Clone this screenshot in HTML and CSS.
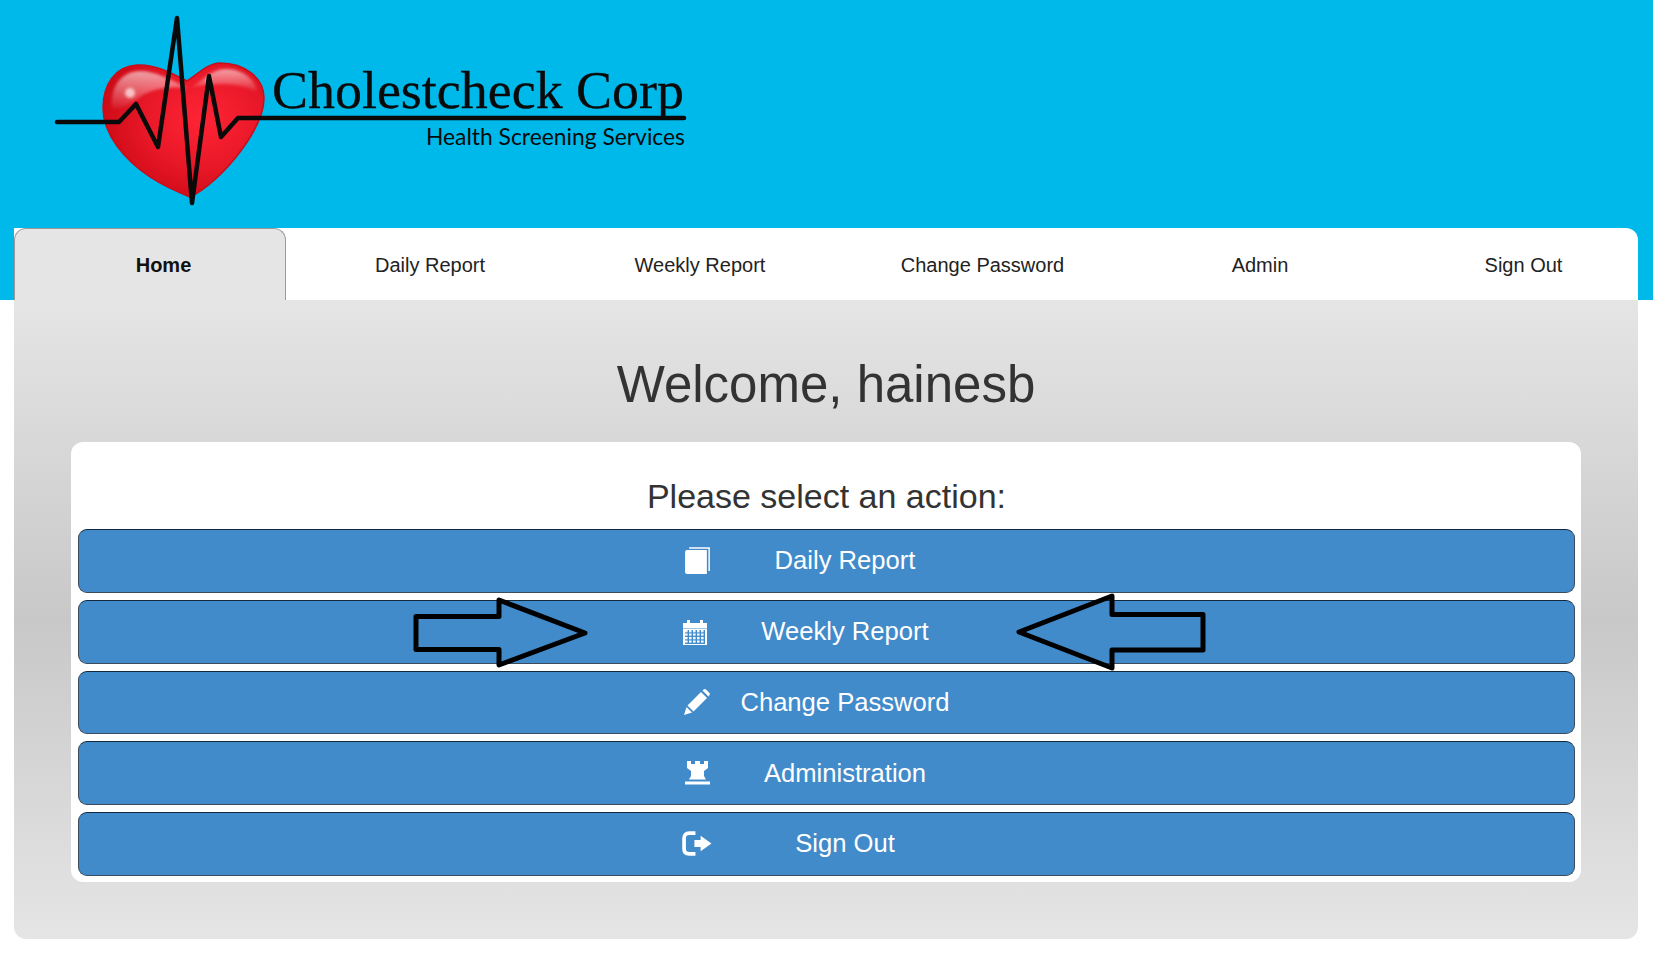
FILE: index.html
```html
<!DOCTYPE html>
<html lang="en">
<head>
  <meta charset="UTF-8" />
  <meta name="viewport" content="width=device-width, initial-scale=1.0"/>
  <title>Cholestcheck Corp</title>
  <link rel="stylesheet" href="styles.css">
</head>

<body>

  <!-- HEADER -->
  <header class="top">
    <svg class="logo" viewBox="0 0 720 228" width="720" height="228">
      <defs>
        <radialGradient id="heartFill" cx="0.62" cy="0.42" r="0.72">
          <stop offset="0" stop-color="#ff2435"/>
          <stop offset="0.5" stop-color="#e81828"/>
          <stop offset="0.85" stop-color="#d00b18"/>
          <stop offset="1" stop-color="#c00812"/>
        </radialGradient>
        <linearGradient id="shine" x1="0" y1="0" x2="0" y2="1">
          <stop offset="0" stop-color="#ffffff" stop-opacity="0.6"/>
          <stop offset="1" stop-color="#ffffff" stop-opacity="0.05"/>
        </linearGradient>
        <filter id="soft" x="-30%" y="-30%" width="160%" height="160%">
          <feGaussianBlur stdDeviation="1.5"/>
        </filter>
      </defs>
      <path d="M187 81 C172 73 155 64 137 65 C115 66 103 85 103 108 C103 135 125 160 150 177 C165 187 180 193 190 197 C205 190 225 172 240 152 C255 132 264 115 264 98 C264 78 245 63 220 63 C208 63 197 75 187 81 Z" fill="url(#heartFill)" stroke="#c50f1c" stroke-width="1.5"/>
      <path d="M112 108 C110 86 122 71 140 71 C155 71 170 79 187 88 C170 86 150 88 136 100 C128 106 118 110 112 108 Z" fill="url(#shine)" filter="url(#soft)"/>
      <path d="M192 87 C203 80 212 69 226 69 C243 69 256 80 257 92 C245 84 220 82 192 87 Z" fill="url(#shine)" filter="url(#soft)"/>
      <circle cx="130" cy="93" r="5" fill="#fff" opacity="0.65" filter="url(#soft)"/>
      <ellipse cx="209" cy="82" rx="2.5" ry="7" fill="#fff" opacity="0.8" filter="url(#soft)"/>
      <polyline points="57,122 119,122 136,104 158,147 177,18 192,203 209,76 221,137 238,118 684,118" fill="none" stroke="#0a0a0a" stroke-width="4.5" stroke-linejoin="round" stroke-linecap="round"/>
      <text class="logo-name" x="272" y="108" textLength="412" lengthAdjust="spacingAndGlyphs">Cholestcheck Corp</text>
      <text class="logo-sub" x="426" y="145" textLength="259" lengthAdjust="spacingAndGlyphs">Health Screening Services</text>
    </svg>

    <!-- NAVIGATION -->
    <nav class="tabs">
      <a class="tab active" href="#">Home</a>
      <a class="tab" href="#">Daily Report</a>
      <a class="tab" href="#">Weekly Report</a>
      <a class="tab" href="#">Change Password</a>
      <a class="tab" href="#">Admin</a>
      <a class="tab" href="#">Sign Out</a>
    </nav>
  </header>

  <main class="panel">
    <h1>Welcome, hainesb</h1>

    <div class="card">
      <h2>Please select an action:</h2>

      <div class="actions">
        <a class="action" href="#">
          <svg class="icon" width="25" height="27" viewBox="0 0 24 26">
            <path d="M0 5 Q0 3 2 3 H21 V26 H2 Q0 26 0 24 Z" fill="#fff"/>
            <path d="M4 1 H23.2 V23" fill="none" stroke="#fff" stroke-width="1.4"/>
          </svg>
          <span>Daily Report</span>
        </a>

        <a class="action" href="#">
          <svg class="icon icon-cal" width="24" height="26" viewBox="0 0 24 26">
            <defs>
              <pattern id="calCells" x="2" y="11" width="4" height="3.5" patternUnits="userSpaceOnUse">
                <rect width="2.6" height="2.2" fill="#fff"/>
              </pattern>
            </defs>
            <path d="M0 4 H4 V1 H7 V4 H17 V1 H20 V4 H24 V9.5 H0 Z" fill="#fff"/>
            <rect x="0" y="10" width="24" height="16" fill="#fff"/>
            <rect x="2" y="11" width="20" height="14" fill="#428bca"/>
            <rect x="2" y="11" width="20" height="14" fill="url(#calCells)"/>
          </svg>
          <span>Weekly Report</span>
          <!-- arrows drawn over the page -->
          <svg class="arrow arrow-left" width="180" height="80" viewBox="0 0 180 80">
            <path d="M5 23.5 H88 V7 L174 40 L88 72 V56.5 H5 Z" fill="none" stroke="#000" stroke-width="5" stroke-linejoin="round"/>
          </svg>
          <svg class="arrow arrow-right" width="194" height="80" viewBox="0 0 194 80">
            <path d="M188 21.5 H97 V3 L4 39 L97 75 V57 H188 Z" fill="none" stroke="#000" stroke-width="5" stroke-linejoin="round"/>
          </svg>
        </a>

        <a class="action" href="#">
          <svg class="icon" width="26" height="26" viewBox="0 0 26 26">
            <path d="M0 26 L2.5 18 L8 23.5 Z" fill="#fff"/>
            <path d="M3.5 16.5 L17 3 L23 9 L9.5 22.5 Z" fill="#fff"/>
            <path d="M18.5 1.5 L20 0.3 Q21 -0.3 22 0.5 L25.5 4 Q26.2 5 25.5 6 L24.5 7.5 Z" fill="#fff"/>
          </svg>
          <span>Change Password</span>
        </a>

        <a class="action" href="#">
          <svg class="icon" width="25" height="24" viewBox="0 0 25 24">
            <path d="M2 0 H6 V3 H10 V0 H15 V3 H19 V0 H23 V7 L19 10 V15 L21 18.5 H4 L6 15 V10 L2 7 Z" fill="#fff"/>
            <rect x="0" y="20.5" width="25" height="3" fill="#fff"/>
          </svg>
          <span>Administration</span>
        </a>

        <a class="action" href="#">
          <svg class="icon" width="30" height="25" viewBox="0 0 29 24">
            <path d="M13 2 H7 Q2 2 2 7 V17 Q2 22 7 22 H13" fill="none" stroke="#fff" stroke-width="3.6"/>
            <path d="M12 8.5 H18 V4.5 L28.5 12 L18 19.5 V15.5 H12 Z" fill="#fff"/>
          </svg>
          <span>Sign Out</span>
        </a>
      </div>
    </div>
  </main>

</body>
</html>
```

FILE: styles.css
```css
* {
  box-sizing: border-box;
  font-family: "Liberation Sans", Arial, sans-serif;
}

body {
  margin: 0;
  background: #fff;
  color: #333;
}

.top {
  background: #00b9eb;
  height: 300px;
}

.logo {
  display: block;
}

.logo-name {
  font-family: "Liberation Serif", serif;
  font-size: 52px;
  fill: #0a0a0a;
  stroke: #0a0a0a;
  stroke-width: 0.3px;
}

.logo-sub {
  font-family: Lato, sans-serif;
  font-size: 24px;
  fill: #0a0a0a;
}

.tabs {
  display: grid;
  grid-template-columns: 272px 288px 252px 313px 242px 1fr;
  height: 72px;
  margin: 0 15px 0 14px;
  background: #fff;
  border-radius: 0 12px 0 0;
}

.tab {
  display: flex;
  align-items: center;
  justify-content: center;
  padding-top: 2px;
  font-size: 20px;
  color: #222;
  text-decoration: none;
}

.tab:last-child {
  padding-left: 28px;
}

.tab.active {
  padding-left: 27px;
  background: #e5e5e5;
  border: 1px solid #999;
  border-bottom: none;
  border-radius: 12px 12px 0 0;
  font-weight: bold;
  color: #111;
}

.panel {
  height: 639px;
  margin: 0 15px 21px 14px;
  padding: 0 57px;
  background: linear-gradient(to bottom, #e5e5e5 0%, #c8c8c8 50%, #e5e5e5 100%);
  border-radius: 0 0 12px 12px;
}

h1 {
  margin: 0;
  height: 142px;
  padding-top: 55px;
  text-align: center;
  font-size: 51px;
  font-weight: normal;
  line-height: 60px;
}

.card {
  height: 440px;
  padding: 0 6px 0 7px;
  background: #fff;
  border-radius: 12px;
}

h2 {
  margin: 0;
  height: 87px;
  padding-top: 34px;
  text-align: center;
  font-size: 34px;
  font-weight: normal;
  line-height: 40px;
}

.actions {
  display: flex;
  flex-direction: column;
  gap: 7px;
}

.action {
  position: relative;
  display: grid;
  grid-template-columns: 600px 36px 260px 1fr;
  align-items: center;
  height: 63.75px;
  background: #428bca;
  border: 1px solid #3c4c5c;
  border-top-color: #14283c;
  border-radius: 9px;
  font-size: 25.6px;
  color: #fff;
  text-decoration: none;
}

.action .icon {
  grid-column: 2;
  justify-self: center;
}

.action .icon-cal {
  margin-right: 4px;
}

.action span {
  grid-column: 3;
  text-align: center;
  white-space: nowrap;
}

.arrow {
  position: absolute;
  top: -8px;
}

.arrow-left {
  left: 332px;
}

.arrow-right {
  left: 936px;
}
```
